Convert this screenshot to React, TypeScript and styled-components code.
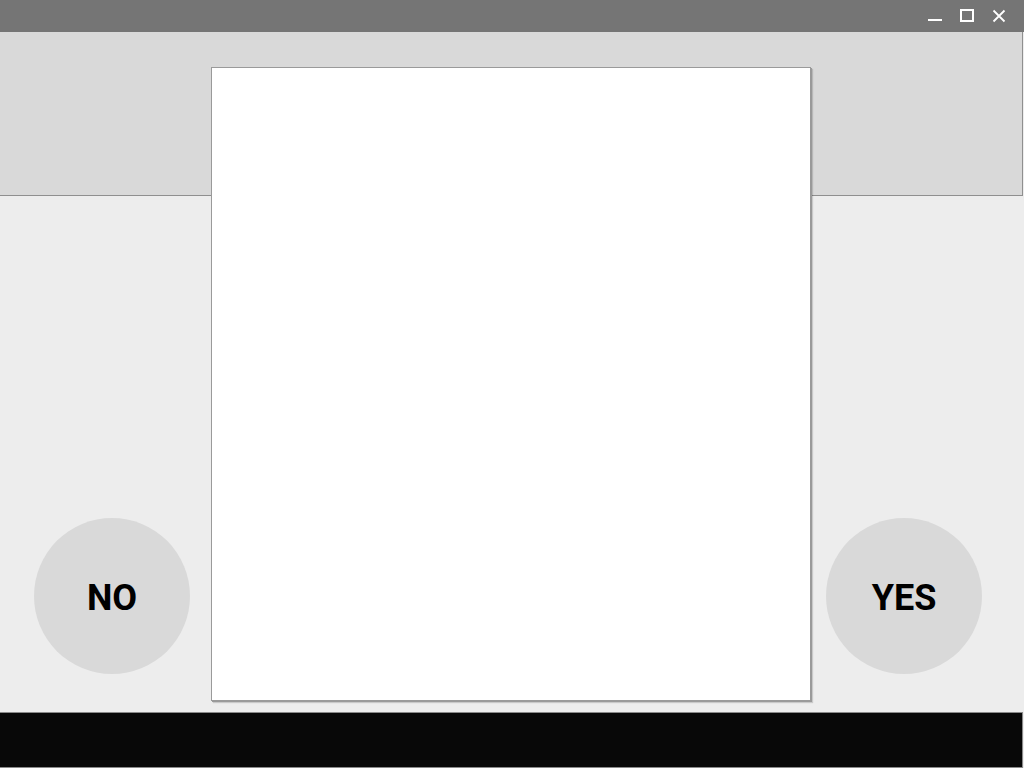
import React from "react";
import styled, { createGlobalStyle } from "styled-components";

const Global = createGlobalStyle`
  html, body { margin: 0; padding: 0; }
  body { font-family: Roboto, "Liberation Sans", sans-serif; background: #ededed; }
`;

const Screen = styled.div`
  width: 1024px;
  height: 768px;
  display: flex;
  flex-direction: column;
  background: #ededed;
  overflow: hidden;
`;

const TitleBar = styled.div`
  height: 32px;
  flex: none;
  background: #757575;
  display: flex;
  justify-content: flex-end;
  align-items: center;
  padding-right: 11px;
  gap: 4px;
`;

const WinButton = styled.button`
  width: 28px;
  height: 32px;
  padding: 0;
  border: none;
  background: transparent;
  display: flex;
  align-items: center;
  justify-content: center;
  color: #ffffff;
`;

const Stage = styled.div`
  flex: 1;
  display: grid;
  grid-template-columns: 1fr;
  grid-template-rows: 1fr;
`;

const Band = styled.div`
  grid-area: 1 / 1;
  align-self: start;
  width: 1022px;
  height: 163px;
  background: #d9d9d9;
  border-right: 1px solid #8f8f8f;
  border-bottom: 1px solid #8f8f8f;
`;

const Content = styled.div`
  grid-area: 1 / 1;
  display: flex;
  align-items: flex-end;
  padding: 35px 0 11px 34px;
`;

const Circle = styled.button`
  width: 156px;
  height: 156px;
  border-radius: 50%;
  border: none;
  background: #d9d9d9;
  display: flex;
  align-items: center;
  justify-content: center;
  margin-bottom: 27px;
  padding: 0;
  font-family: Roboto, "Liberation Sans", sans-serif;
  font-weight: 700;
  font-size: 36px;
  color: #000;
  flex: none;
`;

const Label = styled.span`
  display: block;
  transform: translateY(2px);
`;

const Card = styled.div`
  width: 598px;
  height: 632px;
  background: #ffffff;
  border: 1px solid #9a9a9a;
  box-shadow: 1px 1px 0 0 #9a9a9a, 2px 2px 1px 0 rgba(0, 0, 0, 0.15);
  margin: 0 15px 0 21px;
  flex: none;
`;

const BottomBar = styled.div`
  height: 54px;
  width: 1022px;
  flex: none;
  background: #080808;
  border: 1px solid #8a8a8a;
  border-left: none;
`;

export default function App() {
  return (
    <>
      <Global />
      <Screen>
        <TitleBar>
          <WinButton aria-label="minimize">
            <svg width="16" height="16" viewBox="0 0 16 16">
              <rect x="1" y="11" width="14" height="2" fill="#fff" />
            </svg>
          </WinButton>
          <WinButton aria-label="maximize">
            <svg width="16" height="16" viewBox="0 0 16 16">
              <rect x="2" y="2" width="12" height="11" fill="none" stroke="#fff" strokeWidth="2" />
            </svg>
          </WinButton>
          <WinButton aria-label="close">
            <svg width="16" height="16" viewBox="0 0 16 16">
              <path d="M2.5 2.5 L13.5 13.5 M13.5 2.5 L2.5 13.5" stroke="#fff" strokeWidth="1.8" />
            </svg>
          </WinButton>
        </TitleBar>
        <Stage>
          <Band />
          <Content>
            <Circle>
              <Label>NO</Label>
            </Circle>
            <Card />
            <Circle>
              <Label>YES</Label>
            </Circle>
          </Content>
        </Stage>
        <BottomBar />
      </Screen>
    </>
  );
}
